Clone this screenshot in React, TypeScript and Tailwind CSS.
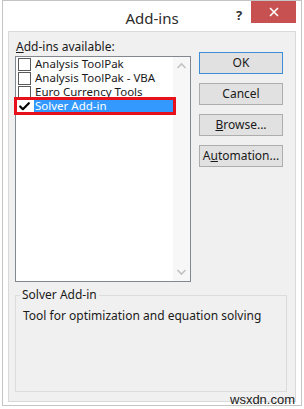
import { Check } from "lucide-react";

const items = [
  { name: "Analysis ToolPak", checked: false },
  { name: "Analysis ToolPak - VBA", checked: false },
  { name: "Euro Currency Tools", checked: false },
  { name: "Solver Add-in", checked: true },
];

function Btn({ children, focus }: { children: React.ReactNode; focus?: boolean }) {
  return (
    <button
      className={
        "h-[22px] w-[84px] border bg-[#e1e1e1] text-[12px] leading-none text-[#1a1a1a] " +
        (focus ? "border-[#3c8fd6]" : "border-[#adadad]")
      }
    >
      {children}
    </button>
  );
}

export default function App() {
  return (
    <div
      className="relative h-[409px] w-[304px] bg-white"
      style={{ fontFamily: '"Noto Sans", "Open Sans", sans-serif' }}
    >
      <div className="ml-[2px] flex h-[406px] w-[300px] flex-col border border-[#c4c4c4] bg-white">
        {/* title bar */}
        <div className="relative h-[30px] shrink-0">
          <div className="pt-[7px] text-center text-[15px] leading-[20px] text-[#2b2b2b]">Add-ins</div>
          <span className="absolute left-[233px] top-[5px] text-[13px] font-bold text-[#333]">?</span>
          <div className="absolute right-[5px] top-0 flex h-[22px] w-[45px] items-center justify-center bg-[#c75050]">
            <svg width="10" height="10" viewBox="0 0 10 10">
              <path d="M1 1 L9 9 M9 1 L1 9" stroke="white" strokeWidth="1.6" />
            </svg>
          </div>
        </div>

        {/* client area */}
        <div className="mx-[5px] mb-[3px] flex-1 border border-[#d9d9d9] bg-[#f0f0f0] px-[6px] pt-[7px]">
          <div className="flex">
            <div>
              <div className="pl-[1px] text-[12px] leading-[16px] text-[#1a1a1a]">
                <span className="underline">A</span>dd-ins available:
              </div>
              <div className="relative mt-[1px] flex h-[226px] w-[176px] border border-[#828790] bg-white">
                <div className="flex-1">
                  {items.map((it) => (
                    <div key={it.name} className="flex h-[14px] items-center">
                      <div
                        className={
                          "ml-[2px] flex h-[13px] w-[13px] shrink-0 items-center justify-center bg-white " +
                          (it.checked ? "" : "border border-[#5a5a5a]")
                        }
                      >
                        {it.checked && <Check size={13} strokeWidth={4} className="text-black" />}
                      </div>
                      <div
                        className={
                          "ml-[3px] h-[14px] pl-[1px] pr-2 text-[11.5px] leading-[14px] " +
                          (it.checked ? "flex-1 bg-[#3399ff] text-white" : "text-[#1a1a1a]")
                        }
                      >
                        {it.name}
                      </div>
                    </div>
                  ))}
                </div>
                <div className="flex w-[17px] shrink-0 flex-col justify-between bg-[#f7f7f7] py-[5px]">
                  <svg width="17" height="8" viewBox="0 0 17 8">
                    <path d="M4.5 6 L8.5 2 L12.5 6" stroke="#c2c2c2" strokeWidth="1.6" fill="none" />
                  </svg>
                  <svg width="17" height="8" viewBox="0 0 17 8">
                    <path d="M4.5 2 L8.5 6 L12.5 2" stroke="#c2c2c2" strokeWidth="1.6" fill="none" />
                  </svg>
                </div>
                {/* annotation outline */}
                <div className="absolute left-[-2px] top-[40px] h-[18px] w-[162px] border-[3px] border-[#e8101a]" />
              </div>
            </div>
            <div className="ml-[8px] mt-[13px] flex flex-col gap-[9px]">
              <Btn focus>OK</Btn>
              <Btn>Cancel</Btn>
              <Btn>
                <span className="underline">B</span>rowse...
              </Btn>
              <Btn>
                A<span className="underline">u</span>tomation...
              </Btn>
            </div>
          </div>

          {/* description group */}
          <div className="relative mt-[13px] h-[97px] w-[272px] border border-[#dcdcdc] px-[7px] pt-[12px]">
            <span className="absolute left-[4px] top-[-9px] bg-[#f0f0f0] px-[2px] text-[12px] leading-[16px] text-[#1a1a1a]">
              Solver Add-in
            </span>
            <div className="text-[12px] leading-[16px] text-[#1a1a1a]">
              Tool for optimization and equation solving
            </div>
          </div>
        </div>
      </div>
      <span
        className="absolute left-[230px] top-[390px] text-[13px] text-[#222]"
        style={{ fontFamily: '"Liberation Sans", Arial, sans-serif' }}
      >
        wsxdn.com
      </span>
    </div>
  );
}
